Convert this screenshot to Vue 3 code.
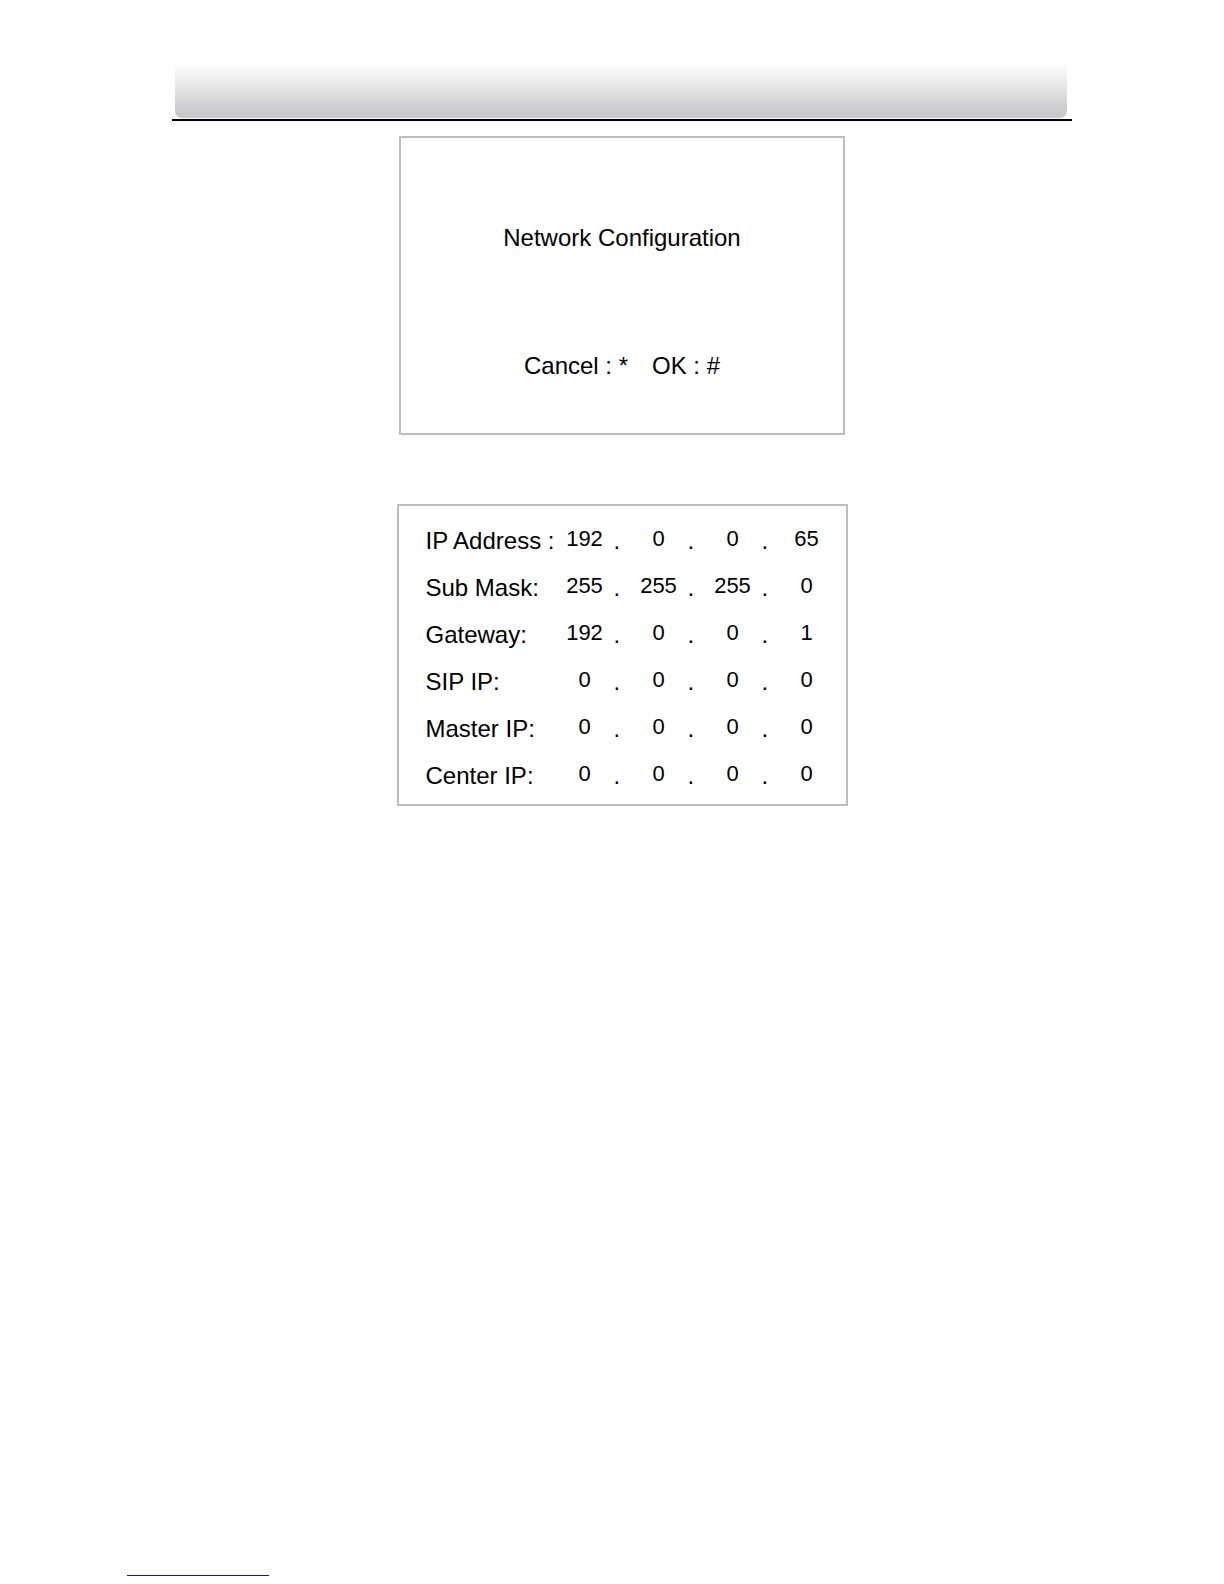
<script setup>
const rows = [
  { label: 'IP Address :', octets: [192, 0, 0, 65] },
  { label: 'Sub Mask:', octets: [255, 255, 255, 0] },
  { label: 'Gateway:', octets: [192, 0, 0, 1] },
  { label: 'SIP IP:', octets: [0, 0, 0, 0] },
  { label: 'Master IP:', octets: [0, 0, 0, 0] },
  { label: 'Center IP:', octets: [0, 0, 0, 0] },
]
</script>

<template>
  <div class="page">
    <header class="banner">
      <div class="band"></div>
    </header>

    <main class="content">
      <section class="screen prompt">
        <h1 class="title">Network Configuration</h1>
        <p class="keys">
          <span>Cancel : *</span>
          <span>OK : #</span>
        </p>
      </section>

      <section class="screen settings">
        <table class="addresses">
          <colgroup>
            <col class="label-col" />
            <template v-for="n in 4" :key="n">
              <col class="octet-col" />
              <col v-if="n < 4" class="dot-col" />
            </template>
          </colgroup>
          <tbody>
            <tr v-for="row in rows" :key="row.label">
              <th scope="row">{{ row.label }}</th>
              <template v-for="(octet, i) in row.octets" :key="i">
                <td class="octet">{{ octet }}</td>
                <td v-if="i < 3" class="dot">.</td>
              </template>
            </tr>
          </tbody>
        </table>
      </section>
    </main>

    <footer class="footer">
      <div class="rule"></div>
    </footer>
  </div>
</template>

<style>
body {
  margin: 0;
  background: #fff;
}
</style>

<style scoped>
.page {
  box-sizing: border-box;
  display: flex;
  flex-direction: column;
  min-height: 100vh;
  padding: 62px 152px 8px 172px;
  font-family: "Liberation Sans", Arial, sans-serif;
  font-size: 24px;
  color: #000;
}

.banner {
  padding: 0 5px 1px 3px;
  border-bottom: 2px solid #000;
}

.band {
  height: 56px;
  border-radius: 0 0 7px 7px;
  background: linear-gradient(#fff 0%, #f3f3f3 22%, #e2e2e2 50%, #d0d0d2 78%, #c7c7c9 100%);
}

.content {
  display: flex;
  flex-direction: column;
  align-items: center;
  gap: 69px;
  padding-top: 15px;
}

.screen {
  box-sizing: border-box;
  max-width: 100%;
  border: 2px solid #bebebe;
}

.prompt {
  width: 446px;
  padding: 86px 0 53px;
}

.title {
  margin: 0 0 100px;
  font-size: 24px;
  font-weight: 400;
  line-height: 28px;
  text-align: center;
}

.keys {
  display: flex;
  justify-content: center;
  gap: 24px;
  margin: 0;
  line-height: 28px;
}

.settings {
  width: 451px;
  padding: 11px 10px 5px 27px;
}

.addresses {
  width: 410px;
  table-layout: fixed;
  border-collapse: collapse;
}

.label-col {
  width: 130px;
}

.octet-col {
  width: 58px;
}

.dot-col {
  width: 16px;
}

th,
td {
  padding: 0;
  line-height: 47px;
  vertical-align: top;
  white-space: nowrap;
}

th {
  font-weight: 400;
  text-align: left;
}

.octet {
  font-size: 22px;
  line-height: 44px;
  text-align: center;
}

.footer {
  margin: auto 0 0 -45px;
}

.rule {
  width: 142px;
  height: 1px;
  background: #1a1a78;
}
</style>
